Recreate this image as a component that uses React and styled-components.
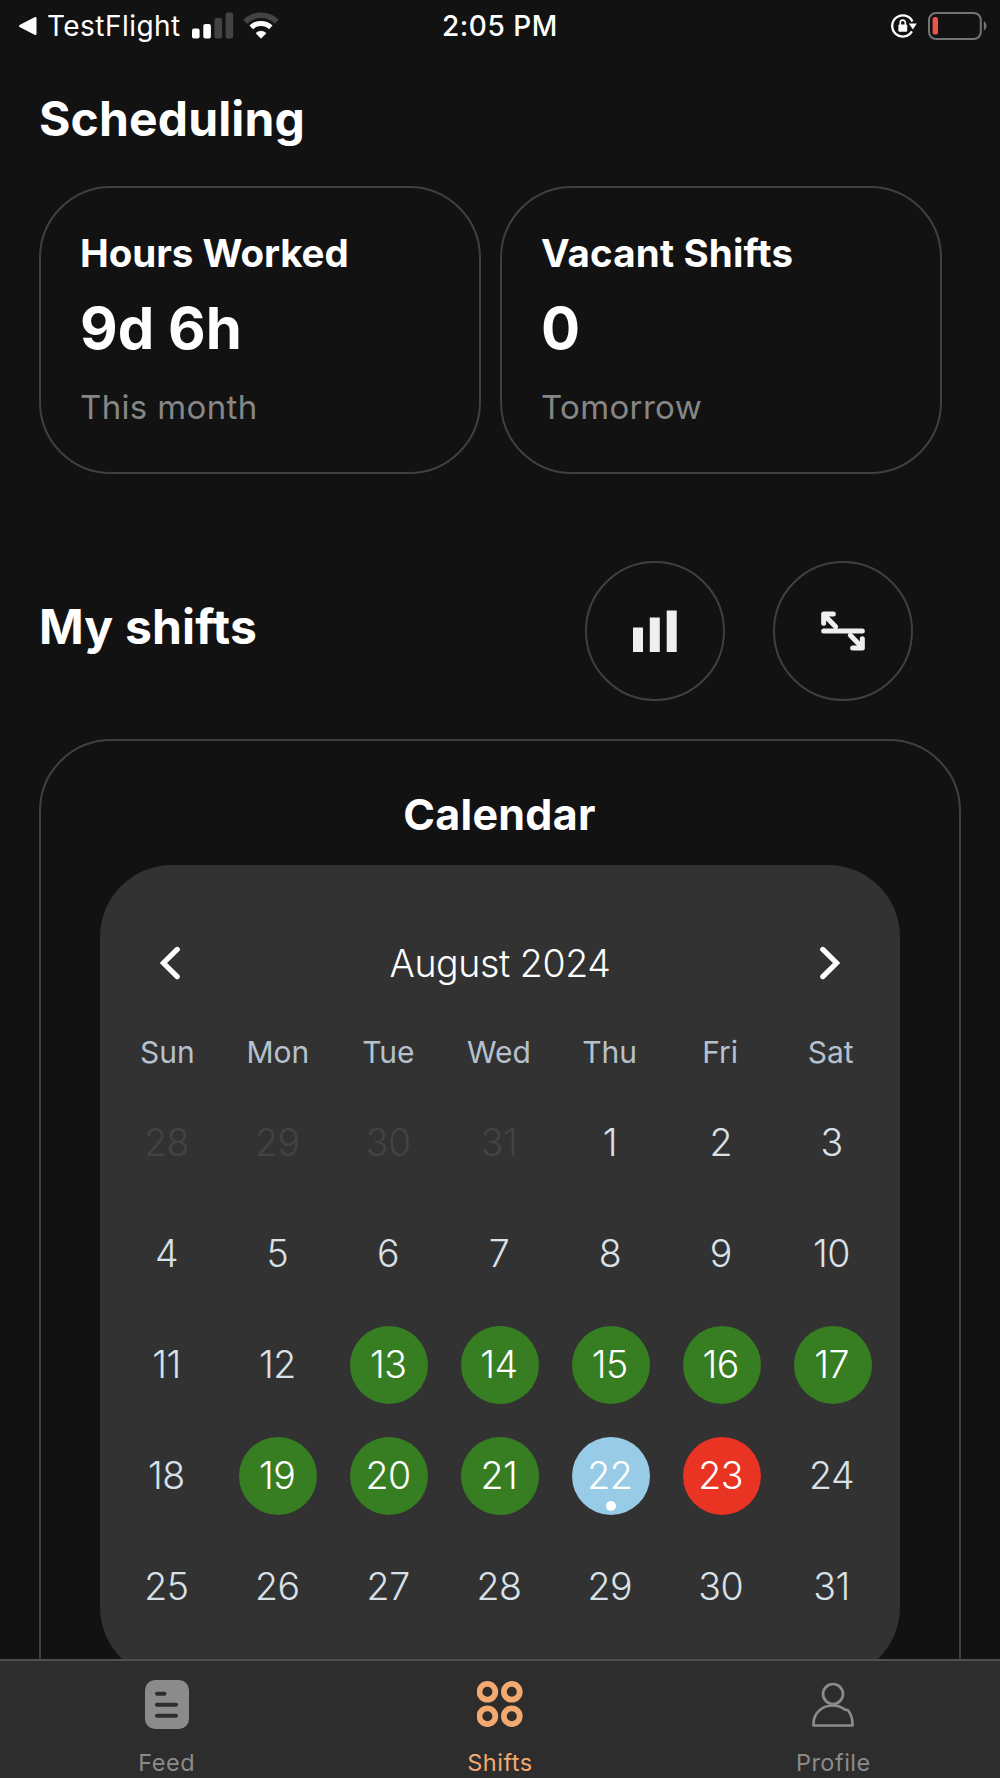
import React from 'react';
import styled, { createGlobalStyle } from 'styled-components';

const GlobalStyle = createGlobalStyle`
  * {
    box-sizing: border-box;
  }

  body {
    margin: 0;
    background-color: #121212;
    font-family: Inter, 'Liberation Sans', sans-serif;
    color: white;
  }

  svg {
    display: block;
    flex: none;
  }
`;

const Screen = styled.div`
  width: 1000px;
  height: 1778px;
  display: flex;
  flex-direction: column;
  overflow: hidden;
  background-color: #121212;
`;

const StatusBar = styled.header`
  height: 51px;
  flex: none;
  display: grid;
  grid-template-columns: 1fr auto 1fr;
  align-items: center;
  padding: 0 12px;
  font-size: 28px;
  line-height: 50px;
`;

const StatusGroup = styled.div`
  display: flex;
  align-items: center;
  gap: ${({ $end }) => ($end ? '11px' : '9px')};
  padding-left: ${({ $end }) => ($end ? '0' : '6px')};
  justify-content: ${({ $end }) => ($end ? 'flex-end' : 'flex-start')};
`;

const BackApp = styled.span`
  width: 136px;
  white-space: nowrap;
  letter-spacing: 0.45px;
`;

const Time = styled.span`
  font-weight: 550;
  letter-spacing: 0.55px;
`;

const Content = styled.main`
  height: 1608px;
  flex: none;
  display: flex;
  flex-direction: column;
  padding: 38px 39px 0;
  overflow: hidden;
`;

const Heading = styled.h1`
  margin: 0;
  font-size: 48px;
  line-height: 60px;
  font-weight: 700;
  letter-spacing: 0.15px;
`;

const StatRow = styled.section`
  display: flex;
  gap: 19px;
  margin-top: 37px;
  flex: none;
`;

const StatCard = styled.div`
  width: 442px;
  height: 288px;
  padding: 40px 0 0 39px;
  border: 2.67px solid #404040;
  border-radius: 72px;
`;

const StatTitle = styled.div`
  font-size: 38.5px;
  line-height: 50px;
  font-weight: 700;
  letter-spacing: ${({ $spacing }) => $spacing};
`;

const StatValue = styled.div`
  margin-top: 15px;
  font-size: 58px;
  line-height: 70px;
  font-weight: 700;
`;

const StatNote = styled.div`
  margin-top: 24px;
  font-size: 33px;
  line-height: 40px;
  color: #868686;
  letter-spacing: 0.35px;
`;

const ShiftsHeader = styled.section`
  flex: none;
  height: 141px;
  margin-top: 86px;
  padding-right: 48px;
  display: flex;
  align-items: center;
  gap: 48px;

  ${Heading} {
    flex: 1;
    padding-bottom: 8px;
  }
`;

const RoundButton = styled.button`
  width: 140px;
  height: 140px;
  padding: 0;
  display: flex;
  align-items: center;
  justify-content: center;
  background: none;
  border: 2.67px solid #404040;
  border-radius: 50%;
`;

const CalendarCard = styled.section`
  flex: none;
  height: 1040px;
  margin-top: 38px;
  padding: 43px 59px 0;
  border: 2.67px solid #404040;
  border-radius: 72px;
`;

const CalendarTitle = styled.h2`
  margin: 0 0 21px;
  padding-right: 1px;
  font-size: 43px;
  line-height: 60px;
  font-weight: 700;
  text-align: center;
  letter-spacing: 0.25px;
`;

const Calendar = styled.div`
  height: 814px;
  padding: 68px 12px 0;
  background-color: #323232;
  border-radius: 72px;
`;

const MonthBar = styled.div`
  height: 60px;
  padding: 0 48px;
  display: flex;
  align-items: center;
  justify-content: space-between;
  font-size: 37.5px;
  font-weight: 300;
  letter-spacing: -0.4px;
`;

const WeekDays = styled.div`
  display: grid;
  grid-template-columns: repeat(7, 1fr);
  margin-top: 39px;
  margin-right: 2px;
  font-size: 30px;
  line-height: 40px;
  text-align: center;
  color: #b6c1cd;
`;

const Days = styled.div`
  display: grid;
  grid-template-columns: repeat(7, 1fr);
  grid-auto-rows: 111px;
  margin-top: 15.5px;
  place-items: center;
`;

const statusColors = {
  worked: '#377e22',
  today: '#98cbe6',
  missed: '#e93323',
};

const Day = styled.div`
  position: relative;
  width: 78px;
  height: 78px;
  border-radius: 50%;
  padding: 0 2px 2px 0;
  display: flex;
  align-items: center;
  justify-content: center;
  font-size: 37.5px;
  font-weight: 300;
  letter-spacing: -0.5px;
  color: ${({ $status, $outside }) => ($outside ? '#434343' : $status ? 'white' : '#d9e1e8')};
  background-color: ${({ $status }) => statusColors[$status] || 'transparent'};
`;

const Dot = styled.span`
  position: absolute;
  bottom: 4px;
  left: 34px;
  width: 10px;
  height: 10px;
  border-radius: 50%;
  background-color: white;
`;

const TabBar = styled.nav`
  flex: 1;
  display: grid;
  grid-template-columns: repeat(3, 1fr);
  background-color: #2d2d2d;
  border-top: 2px solid #4e4e4e;
`;

const Tab = styled.div`
  display: flex;
  flex-direction: column;
  align-items: center;
  padding-top: 17px;
  font-size: 23.5px;
  line-height: 30px;
  letter-spacing: 0.5px;
  color: ${({ $active }) => ($active ? '#f3a96f' : '#8b8b8b')};
`;

const TabIcon = styled.div`
  height: 52px;
  margin-bottom: 18px;
  display: flex;
  align-items: center;
`;

const WEEK = ['Sun', 'Mon', 'Tue', 'Wed', 'Thu', 'Fri', 'Sat'];
const WORKED = [13, 14, 15, 16, 17, 19, 20, 21];

function getStatus(n) {
  if (WORKED.includes(n)) return 'worked';
  if (n === 22) return 'today';
  if (n === 23) return 'missed';
  return undefined;
}

// trailing days of July, then all of August
const days = [
  ...[28, 29, 30, 31].map((n) => ({ n, outside: true })),
  ...Array.from({ length: 31 }, (_, i) => ({ n: i + 1, status: getStatus(i + 1) })),
];

const BackIcon = () => (
  <svg width="20" height="20" viewBox="0 0 20 20">
    <path d="M2 10 L17.5 2 V18 Z" fill="white" stroke="white" strokeWidth="2" strokeLinejoin="round" />
  </svg>
);

const SignalIcon = () => (
  <svg width="42" height="28" viewBox="0 0 42 28">
    <rect x="0" y="16.5" width="7.6" height="10" rx="2" fill="white" />
    <rect x="11.3" y="12" width="7.6" height="14.5" rx="2" fill="white" />
    <rect x="22.5" y="6" width="7.6" height="20.5" rx="2" fill="#434343" />
    <rect x="33.6" y="0.5" width="7.6" height="26" rx="2" fill="#434343" />
  </svg>
);

const WifiIcon = () => (
  <svg width="36" height="28" viewBox="0 0 36 28">
    <path d="M2.2 9.8 A22.5 22.5 0 0 1 33.8 9.8" fill="none" stroke="#434343" strokeWidth="5.6" />
    <path d="M8.2 15.3 A14.5 14.5 0 0 1 27.8 15.3" fill="none" stroke="white" strokeWidth="5.2" />
    <path d="M13 21.2 A8 8 0 0 1 23 21.2 L18 26.3 Z" fill="white" stroke="white" strokeWidth="0.8" strokeLinejoin="round" />
  </svg>
);

const LockIcon = () => (
  <svg width="26" height="24" viewBox="0 0 26 24">
    <path d="M20.9 17.4 A10.6 10.6 0 1 1 21.4 7.4" fill="none" stroke="white" strokeWidth="2.3" />
    <path d="M17.8 9.6 H25.8 L21.9 15.4 Z" fill="white" />
    <rect x="7.4" y="10.6" width="8.8" height="7.2" rx="1" fill="white" />
    <path d="M9.3 11 V8.6 A2.5 2.5 0 0 1 14.3 8.6 V11" fill="none" stroke="white" strokeWidth="1.6" />
  </svg>
);

const BatteryIcon = () => (
  <svg width="60" height="28" viewBox="0 0 60 28">
    <rect x="1" y="1" width="51.8" height="26" rx="7" fill="none" stroke="#747474" strokeWidth="2" />
    <path d="M55.8 9 A5.6 5.6 0 0 1 55.8 18.6 Z" fill="#747474" />
    <rect x="4.6" y="5" width="5.4" height="17.6" rx="2.2" fill="#ec5545" />
  </svg>
);

const ChartIcon = () => (
  <svg width="44" height="42" viewBox="0 0 44 42" fill="#efefef">
    <rect x="0" y="17.5" width="10" height="24.5" />
    <rect x="16.8" y="7.5" width="10" height="34.5" />
    <rect x="33.7" y="0.5" width="10" height="41.5" />
  </svg>
);

const SwapIcon = () => (
  <svg width="44" height="40" viewBox="0 0 132 120" fill="none" stroke="#efefef" strokeLinecap="round" strokeLinejoin="round">
    <path d="M8 60 H124" strokeWidth="15" />
    <path d="M12 14 L44 47" strokeWidth="15" />
    <path d="M8 37 V9 H37" strokeWidth="15" />
    <path d="M120 106 L88 73" strokeWidth="15" />
    <path d="M124 83 V111 H95" strokeWidth="15" />
  </svg>
);

const Chevron = ({ flip }) => (
  <svg width="20" height="34" viewBox="0 0 20 34">
    <path
      d={flip ? 'M2.8 3.4 L16.6 17 L2.8 30.6' : 'M17.2 3.4 L3.4 17 L17.2 30.6'}
      fill="none"
      stroke="white"
      strokeWidth="5.2"
      strokeLinecap="round"
    />
  </svg>
);

const FeedIcon = () => (
  <svg width="44" height="49" viewBox="0 0 44 49">
    <rect width="44" height="49" rx="10" fill="#8b8b8b" />
    <path d="M12 13.7 H19.5 M12 24.7 H31 M12 35.7 H31" stroke="#2d2d2d" strokeWidth="4" strokeLinecap="round" />
  </svg>
);

const ShiftsIcon = () => (
  <svg width="46" height="46" viewBox="0 0 46 46" fill="none" stroke="#f3a96f" strokeWidth="5.8">
    <circle cx="10.4" cy="10.8" r="7.9" />
    <circle cx="34.8" cy="10.8" r="7.9" />
    <circle cx="10.4" cy="35.2" r="7.9" />
    <circle cx="34.8" cy="35.2" r="7.9" />
  </svg>
);

const ProfileIcon = () => (
  <svg width="42" height="46" viewBox="0 0 42 46" fill="none" stroke="#8b8b8b" strokeWidth="2.7" strokeLinejoin="round">
    <circle cx="21" cy="13" r="10" />
    <path d="M1.5 44.5 C1 33 9 24.5 21 24.5 C26 24.5 30 26.3 33 28.6 L35.8 29 C39 33 40.8 38 40.5 44.5 Z" />
  </svg>
);

const tabs = [
  { label: 'Feed', icon: <FeedIcon /> },
  { label: 'Shifts', icon: <ShiftsIcon />, active: true },
  { label: 'Profile', icon: <ProfileIcon /> },
];

const stats = [
  { title: 'Hours Worked', value: '9d 6h', note: 'This month', spacing: '-0.05px' },
  { title: 'Vacant Shifts', value: '0', note: 'Tomorrow', spacing: '0.15px' },
];

export default function App() {
  return (
    <Screen>
      <GlobalStyle />
      <StatusBar>
        <StatusGroup>
          <BackIcon />
          <BackApp>TestFlight</BackApp>
          <SignalIcon />
          <WifiIcon />
        </StatusGroup>
        <Time>2:05 PM</Time>
        <StatusGroup $end>
          <LockIcon />
          <BatteryIcon />
        </StatusGroup>
      </StatusBar>

      <Content>
        <Heading>Scheduling</Heading>
        <StatRow>
          {stats.map(({ title, value, note, spacing }) => (
            <StatCard key={title}>
              <StatTitle $spacing={spacing}>{title}</StatTitle>
              <StatValue>{value}</StatValue>
              <StatNote>{note}</StatNote>
            </StatCard>
          ))}
        </StatRow>

        <ShiftsHeader>
          <Heading as="h2">My shifts</Heading>
          <RoundButton><ChartIcon /></RoundButton>
          <RoundButton><SwapIcon /></RoundButton>
        </ShiftsHeader>

        <CalendarCard>
          <CalendarTitle>Calendar</CalendarTitle>
          <Calendar>
            <MonthBar>
              <Chevron />
              <span>August 2024</span>
              <Chevron flip />
            </MonthBar>
            <WeekDays>
              {WEEK.map((d) => <span key={d}>{d}</span>)}
            </WeekDays>
            <Days>
              {days.map(({ n, outside, status }) => (
                <Day key={`${n}-${outside}`} $outside={outside} $status={status}>
                  {n}
                  {status === 'today' && <Dot />}
                </Day>
              ))}
            </Days>
          </Calendar>
        </CalendarCard>
      </Content>

      <TabBar>
        {tabs.map(({ label, icon, active }) => (
          <Tab key={label} $active={active}>
            <TabIcon>{icon}</TabIcon>
            {label}
          </Tab>
        ))}
      </TabBar>
    </Screen>
  );
}
